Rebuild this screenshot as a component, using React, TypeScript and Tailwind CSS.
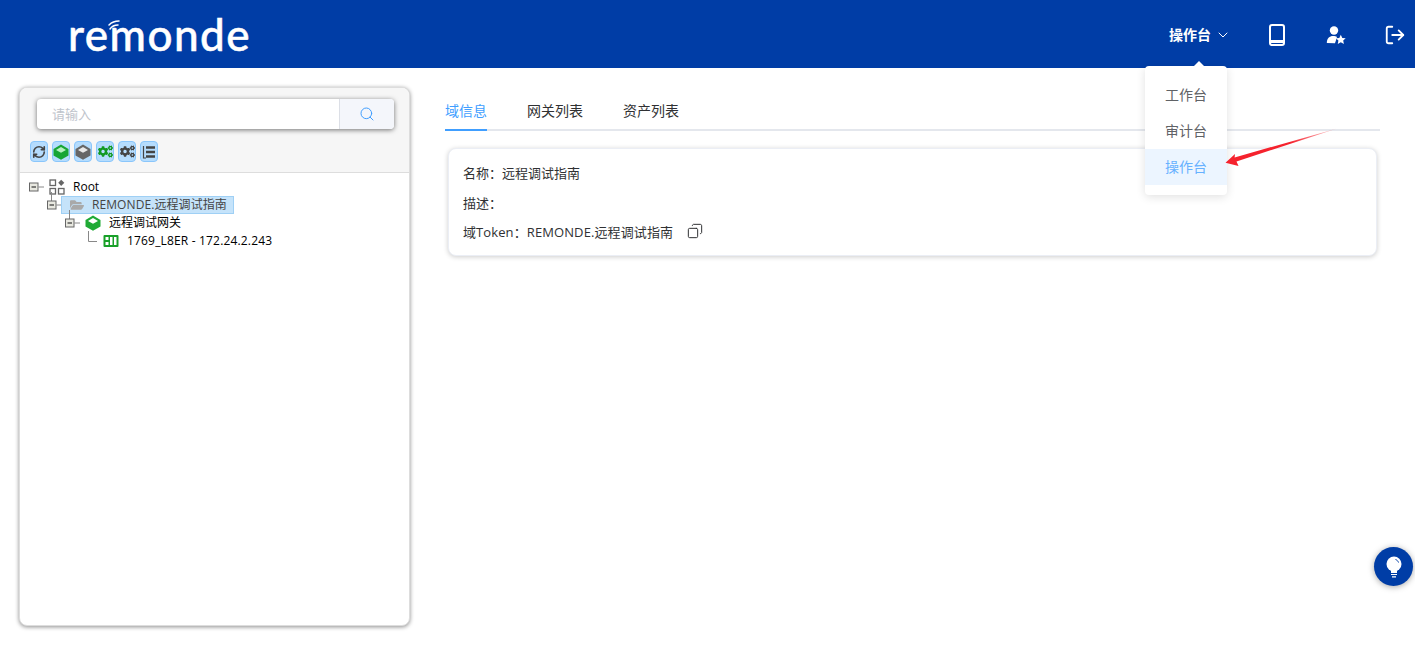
import { ChevronDown, Copy, LogOut, RefreshCw, Search } from "lucide-react";
import { FaCogs, FaFolderOpen } from "react-icons/fa";

const font = "font-['Open_Sans','Noto_Sans_CJK_SC',sans-serif]";

function Cube({ top, side, className }: { top: string; side: string; className?: string }) {
  return (
    <svg viewBox="0 0 16 16" className={className}>
      <path d="M8 .5 15.500 5v6.500L8 15.800 .5 11.500V5z" fill={side} />
      <path d="M8 3 13 5.900 8 8.800 3 5.900z" fill={top} />
    </svg>
  );
}

function UserStar() {
  return (
    <svg viewBox="0 0 20 20" className="w-5 h-5" fill="white">
      <circle cx="8" cy="5.500" r="4.200" />
      <path d="M0.800 18c0-4.600 2.600-7 6.400-7 1.600 0 2.800.3 3.800 1l-2 6.300z" />
      <path d="m14.800 9.800 1.500 3.100 3.400.4-2.500 2.300.7 3.400-3.100-1.700-3 1.700.6-3.400-2.500-2.300 3.400-.4z" />
    </svg>
  );
}

function ToolBtn({ children }: { children: React.ReactNode }) {
  return (
    <span className="w-[18px] h-[21px] rounded-[4px] bg-[#b5dcfd] border border-[#8ac6fb] flex items-center justify-center">
      {children}
    </span>
  );
}

// +/- box of the tree with its links
function Switch({ link }: { link?: boolean }) {
  return (
    <svg viewBox="0 0 18 18" className="w-[18px] h-[18px] shrink-0 overflow-visible">
      {link && <path d="M4.500 -4V5" stroke="#888" strokeWidth="1" />}
      <path d="M9.500 9H15" stroke="#888" strokeWidth="1" />
      <rect x="0.500" y="5" width="8.500" height="8" fill="#e8e8e0" stroke="#666" />
      <path d="M2.500 9h4.500" stroke="#111" strokeWidth="1" />
    </svg>
  );
}

export default function App() {
  return (
    <div className={`relative h-[646px] overflow-hidden bg-white ${font}`}>
      <header className="h-[68px] bg-[#003da6] flex items-center text-white">
        <div className="relative ml-[68px] w-[184px] h-[68px]">
          <span className="absolute left-0 top-1 text-[44px] leading-[60px] font-['Lato',sans-serif] font-medium tracking-[1.5px] [-webkit-text-stroke:0.5px_white]">
            remonde
          </span>
          <svg viewBox="0 0 24 14" className="absolute left-[38px] top-[18px] w-6 h-3.5" fill="none" stroke="white" strokeLinecap="round">
            <path d="M4 11c2-3 5-4 8-4M3 7c3-3 6-4 10-4" strokeWidth="1.500" />
          </svg>
        </div>
        <div className="ml-auto flex items-center pt-px">
          <span className="text-sm font-semibold mt-px">操作台</span>
          <ChevronDown className="w-4 h-4 ml-1" strokeWidth={1.500} />
          <svg viewBox="0 0 16 22" className="w-4 h-[22px] ml-[38px]" fill="none" stroke="white">
            <rect x="1" y="1" width="14" height="20" rx="2" strokeWidth="2" />
            <path d="M1 17.500h14" strokeWidth="3" />
          </svg>
          <span className="ml-[41px]">
            <UserStar />
          </span>
          <LogOut className="w-[22px] h-[22px] ml-[38px] mr-[9px]" strokeWidth={2} />
        </div>
      </header>

      <main className="flex pt-[19px] pl-[19px] pr-[35px]">
        <section className="w-[391px] h-[539px] rounded-lg bg-white border border-[#ddd] shadow-[0_1px_4px_rgba(0,0,0,0.45)] overflow-hidden shrink-0">
          <div className="h-[85px] bg-[#f6f6f6] border-b border-[#ddd] pt-[11px] pl-[10px]">
            <div className="ml-[7px] w-[357px] h-[30px] flex rounded-[4px] bg-white shadow-[0_1px_5px_rgba(0,0,0,0.55)] overflow-hidden">
              <span className="flex-1 pl-[15px] text-[13px] leading-[30px] text-[#c0c4cc]">请输入</span>
              <span className="w-[55px] bg-[#f4f6fb] border-l border-[#dcdfe6] flex items-center justify-center">
                <Search className="w-4 h-4 text-[#409eff]" strokeWidth={1.500} />
              </span>
            </div>
            <div className="flex gap-1 mt-3">
              <ToolBtn>
                <RefreshCw className="w-[14px] h-[14px] text-[#444]" strokeWidth={2.800} />
              </ToolBtn>
              <ToolBtn>
                <Cube top="#b5f0c0" side="#17a535" className="w-4 h-4" />
              </ToolBtn>
              <ToolBtn>
                <Cube top="#e8e8e8" side="#666" className="w-4 h-4" />
              </ToolBtn>
              <ToolBtn>
                <FaCogs className="w-[15px] h-[15px] text-[#119922]" />
              </ToolBtn>
              <ToolBtn>
                <FaCogs className="w-[15px] h-[15px] text-[#444]" />
              </ToolBtn>
              <ToolBtn>
                <svg viewBox="0 0 14 14" className="w-[14px] h-[14px]" fill="none" stroke="#444">
                  <path d="M1.500 1v12H4" strokeWidth="1.200" />
                  <path d="M4 2.500h9M4 7h9M4 11.500h9" strokeWidth="2.400" />
                </svg>
              </ToolBtn>
            </div>
          </div>

          <div className="pt-[5px] pl-[9px] text-xs leading-[18px] text-black">
            <div className="flex items-center h-[18px]">
              <Switch />
              <svg viewBox="0 0 16 16" className="w-4 h-4 ml-[2px]" fill="none" stroke="#666" strokeWidth="1.300">
                <rect x="1" y="1" width="5.500" height="5.500" />
                <rect x="1" y="9.500" width="5.500" height="5.500" />
                <rect x="9.500" y="9.500" width="5.500" height="5.500" />
                <path d="M12.200.8 15.300 3.800 12.200 6.900 9.200 3.800z" fill="#666" stroke="none" />
              </svg>
              <span className="ml-2">Root</span>
            </div>
            <div className="flex items-center h-[18px] ml-[18px]">
              <Switch link />
              <span className="flex items-center h-[18px] w-[173px] -ml-1 pl-2 bg-[#c5e3fa] border border-[#9fd0f5] text-[#444]">
                <FaFolderOpen className="w-[14px] h-[14px] text-[#a9a9a9]" />
                <span className="ml-2 whitespace-nowrap tracking-[0.08px]">REMONDE.远程调试指南</span>
              </span>
            </div>
            <div className="flex items-center h-[18px] ml-9">
              <Switch link />
              <Cube top="#ffffff" side="#1faa35" className="w-4 h-4 ml-[2px]" />
              <span className="ml-2">远程调试网关</span>
            </div>
            <div className="flex items-center h-[18px] ml-[54px]">
              <svg viewBox="0 0 18 18" className="w-[18px] h-[18px] shrink-0 ml-[2px] overflow-visible">
                <path d="M3.500 -1V9.500H12" stroke="#888" fill="none" />
              </svg>
              <svg viewBox="0 0 16 14" className="w-4 h-[14px]">
                <rect x="0.500" y="1" width="15" height="12" fill="#18a028" rx="1" />
                <rect x="7" y="3" width="2.500" height="8" fill="white" />
                <rect x="11" y="3" width="2.500" height="8" fill="white" />
                <rect x="2.500" y="3" width="3" height="3" fill="white" />
                <rect x="2.500" y="8" width="3" height="3" fill="white" />
              </svg>
              <span className="ml-2 whitespace-nowrap tracking-[0.17px]">1769_L8ER - 172.24.2.243</span>
            </div>
          </div>
        </section>

        <section className="flex-1 ml-[35px] mt-px">
          <nav className="flex gap-10 h-[43px] pt-[13px] border-b-2 border-[#e4e7ed] text-sm leading-[20px] text-[#303133]">
            <span className="h-[30px] border-b-2 border-[#409eff] text-[#409eff]">域信息</span>
            <span>网关列表</span>
            <span>资产列表</span>
          </nav>
          <div className="ml-[3px] mr-[3px] mt-[17px] h-[108px] rounded-lg bg-white border border-[#ebeef5] shadow-[0_1px_5px_rgba(0,0,0,0.2)] px-[14px] pt-[14px] text-[13px] leading-[20px] text-[#303133]">
            <p>名称：远程调试指南</p>
            <p className="mt-[10px]">描述：</p>
            <p className="mt-[9px] flex items-center tracking-[0.1px]">
              域Token：REMONDE.远程调试指南
              <Copy className="w-4 h-4 ml-[14px] -mt-0.5 -scale-x-100" strokeWidth={1.500} />
            </p>
          </div>
        </section>
      </main>

      {/* dropdown of the 操作台 menu */}
      <div className="absolute left-[1145px] top-[66px] w-[82px] h-[129px] rounded-[4px] bg-white shadow-[0_2px_10px_rgba(0,0,0,0.12)] pt-[11px] text-sm text-[#606266] text-center">
        <span className="absolute left-[48px] -top-[5px] w-0 h-0 border-x-[6px] border-x-transparent border-b-[6px] border-b-white" />
        <div className="h-9 leading-9">工作台</div>
        <div className="h-9 leading-9">审计台</div>
        <div className="h-9 leading-9 bg-[#ecf5ff] text-[#66b1ff]">操作台</div>
      </div>

      {/* red annotation arrow */}
      <svg className="absolute left-[1220px] top-[120px] w-[125px] h-[50px]" viewBox="0 0 125 50">
        <defs>
          <linearGradient id="arrowFade" x1="0" y1="1" x2="1" y2="0">
            <stop offset="0" stopColor="#f5222d" />
            <stop offset="0.6" stopColor="#f5222d" />
            <stop offset="1" stopColor="#f5222d" stopOpacity="0.2" />
          </linearGradient>
        </defs>
        <path d="M5.500 42.800 15 34l-.4 3.400L117 8.500 16.500 41.500l2 4.500z" fill="url(#arrowFade)" />
      </svg>

      <button className="absolute left-[1374px] top-[547px] w-[39px] h-[39px] rounded-full bg-[#003da6] shadow-[0_1px_6px_rgba(0,0,0,0.35)] flex items-center justify-center">
        <svg viewBox="0 0 18 22" className="w-[18px] h-[22px]">
          <circle cx="9" cy="8" r="7.500" fill="white" />
          <path d="M6 14h6v3H6z" fill="white" />
          <path d="M6 18.500h6M7 20.800h4" stroke="white" strokeWidth="1.200" />
          <path d="M10.500 3.500c1.500.5 2.500 1.500 3 3" stroke="#003da6" strokeWidth="1" fill="none" />
        </svg>
      </button>
    </div>
  );
}
